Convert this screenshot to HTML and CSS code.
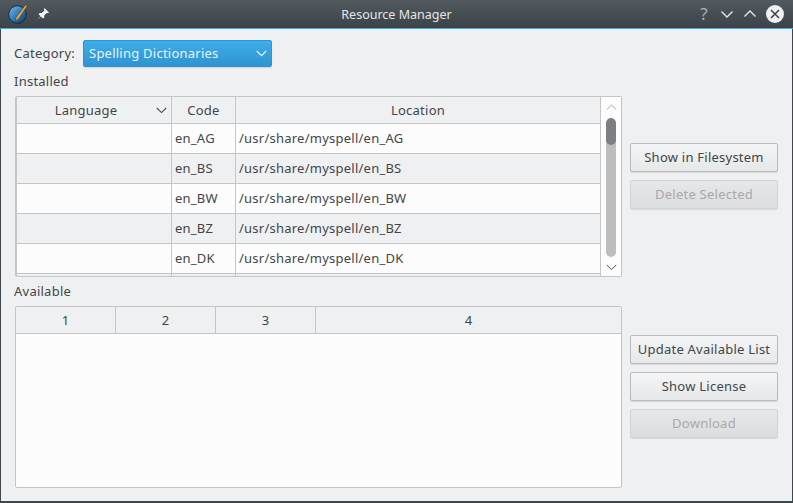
FILE: index.html
```html
<!DOCTYPE html>
<html lang="en">
<head>
<meta charset="utf-8">
<title>Resource Manager</title>
<link rel="stylesheet" href="styles.css">
</head>
<body>
<div class="window">
  <header class="titlebar">
    <div class="tb-left">
      <svg class="logo" width="20" height="20" viewBox="0 0 20 20">
        <defs><linearGradient id="g" x1="0" y1="0" x2="1" y2="1"><stop offset="0" stop-color="#7fbde8"/><stop offset="0.55" stop-color="#2478b8"/><stop offset="1" stop-color="#0c3552"/></linearGradient></defs>
        <circle cx="9.5" cy="10.5" r="8.8" fill="url(#g)" stroke="#0f2c42" stroke-width="1"/>
        <path d="M17.5 0.8 L19.2 2.2 L10.5 15 L7.6 16.8 L8 13.5 Z" fill="#dca64a" stroke="#4f3b1c" stroke-width="0.6"/>
      </svg>
      <svg class="pin" width="14" height="14" viewBox="0 0 14 14">
        <path d="M8.5 1 L13 5.5 L11.8 6.2 L10.8 5.8 L8.2 8.4 L8.2 10.6 L7 11.6 L2.6 7.2 L3.6 6 L5.8 6 L8.4 3.4 L8 2.2 Z M4.6 9.2 L1 13 L5 9.6 Z" fill="#f4f5f6"/>
      </svg>
    </div>
    <div class="tb-title">Resource Manager</div>
    <div class="tb-right">
      <span class="help">?</span>
      <svg width="14" height="14" viewBox="0 0 14 14"><path d="M1.5 4.5 L7 10 L12.5 4.5" class="tb-stroke"/></svg>
      <svg width="14" height="14" viewBox="0 0 14 14"><path d="M1.5 9.5 L7 4 L12.5 9.5" class="tb-stroke"/></svg>
      <svg width="18" height="18" viewBox="0 0 18 18"><circle cx="9" cy="9" r="9" fill="#eef0f1"/><path d="M5 5 L13 13 M13 5 L5 13" stroke="#40474c" stroke-width="1.6" fill="none"/></svg>
    </div>
  </header>
  <main class="content">
    <div class="category-row">
      <span class="label category-label">Category:</span>
      <div class="combo">
        <span class="combo-text">Spelling Dictionaries</span>
        <svg width="11" height="7" viewBox="0 0 11 7"><path d="M0.8 1 L5.5 5.6 L10.2 1" fill="none" stroke="#e4f3fc" stroke-width="1.2"/></svg>
      </div>
    </div>
    <div class="section-label label installed-label">Installed</div>
    <section class="row installed-row">
      <div class="frame installed">
        <div class="table-area">
          <div class="thead cols-a">
            <div class="th th-sort"><span>Language</span>
              <svg width="11" height="7" viewBox="0 0 11 7"><path d="M0.8 1 L5.5 5.6 L10.2 1" fill="none" stroke="#4d4d4d" stroke-width="1.1"/></svg>
            </div>
            <div class="th">Code</div>
            <div class="th">Location</div>
          </div>
          <div class="tr cols-a"><div class="td"></div><div class="td">en_AG</div><div class="td">/usr/share/myspell/en_AG</div></div>
          <div class="tr alt cols-a"><div class="td"></div><div class="td">en_BS</div><div class="td">/usr/share/myspell/en_BS</div></div>
          <div class="tr cols-a"><div class="td"></div><div class="td">en_BW</div><div class="td">/usr/share/myspell/en_BW</div></div>
          <div class="tr alt cols-a"><div class="td"></div><div class="td">en_BZ</div><div class="td">/usr/share/myspell/en_BZ</div></div>
          <div class="tr cols-a"><div class="td"></div><div class="td">en_DK</div><div class="td">/usr/share/myspell/en_DK</div></div>
          <div class="tr alt cols-a"><div class="td"></div><div class="td"></div><div class="td"></div></div>
        </div>
        <div class="scrollbar">
          <svg width="11" height="7" viewBox="0 0 11 7"><path d="M0.8 5.6 L5.5 1 L10.2 5.6" fill="none" stroke="#a9abad" stroke-width="1"/></svg>
          <div class="track"><div class="thumb"></div></div>
          <svg width="11" height="7" viewBox="0 0 11 7"><path d="M0.8 1 L5.5 5.6 L10.2 1" fill="none" stroke="#4d4d4d" stroke-width="1"/></svg>
        </div>
      </div>
      <div class="side side-top">
        <button class="btn">Show in Filesystem</button>
        <button class="btn" disabled>Delete Selected</button>
      </div>
    </section>
    <div class="section-label label available-label">Available</div>
    <section class="row">
      <div class="frame available">
        <div class="table-area">
          <div class="thead cols-b">
            <div class="th">1</div>
            <div class="th">2</div>
            <div class="th">3</div>
            <div class="th th-last">4</div>
          </div>
        </div>
      </div>
      <div class="side side-bottom">
        <button class="btn">Update Available List</button>
        <button class="btn">Show License</button>
        <button class="btn" disabled>Download</button>
      </div>
    </section>
  </main>
</div>
</body>
</html>
```

FILE: styles.css
```css
* { box-sizing: border-box; }
html, body { margin: 0; padding: 0; }
body {
  width: 793px;
  height: 503px;
  overflow: hidden;
  font-family: "Noto Sans", sans-serif;
  font-size: 13px;
  letter-spacing: 0.24px;
  color: #434648;
}
.window {
  width: 793px;
  height: 503px;
  display: flex;
  flex-direction: column;
  background: #eff0f2;
  border-left: 1px solid #3f474d;
  border-right: 1px solid #3f474d;
  border-bottom: 2px solid #3f474d;
}
.titlebar {
  flex: 0 0 29px;
  margin: 0 -1px;
  display: flex;
  align-items: center;
  justify-content: space-between;
  position: relative;
  background: linear-gradient(#525a60, #3b4248);
  border-bottom: 1px solid #3daee9;
  padding: 0 9px 0 8px;
}
.tb-left { display: flex; align-items: center; gap: 8px; }
.tb-title {
  position: absolute;
  left: 0;
  right: 0;
  top: 6px;
  text-align: center;
  color: #e4e6e8;
  font-size: 12.5px;
  letter-spacing: 0;
  line-height: 17px;
}
.tb-right { display: flex; align-items: center; gap: 9px; }
.help { color: #aab0b5; font-size: 17px; line-height: 18px; width: 14px; text-align: center; }
.tb-stroke { fill: none; stroke: #e8eaeb; stroke-width: 1.3; }
.content { flex: 1; padding: 11px 14px 0 13px; display: flex; flex-direction: column; }
.label { line-height: 18px; }
.category-row { display: flex; align-items: center; gap: 7px; height: 27px; }
.category-label { width: 62px; padding-bottom: 2px; height: 20px; }
.combo {
  width: 189px;
  height: 27px;
  display: flex;
  align-items: center;
  justify-content: space-between;
  padding: 0 4px 0 5px;
  border: 1px solid #2e93cf;
  border-radius: 2px;
  background: linear-gradient(#3daee9, #2f93d1);
  color: #e6f4fd;
  box-shadow: 0 1px 1px rgba(0,0,0,.12);
}
.combo-text { padding-bottom: 2px; }
.section-label { height: 18px; }
.installed-label { margin-top: 5px; }
.available-label { margin-top: 5px; }
.row { display: flex; align-items: flex-start; margin-top: 6px; }
.frame {
  display: flex;
  margin-left: 1px;
  width: 607px;
  background: #fcfcfc;
  border: 1px solid #c3c5c7;
  border-radius: 2px;
  overflow: hidden;
}
.installed { height: 181px; border-left-width: 2px; }
.available { height: 182px; }
.table-area { flex: 1; min-width: 0; overflow: hidden; }
.thead { height: 27px; background: #eff0f2; border-bottom: 1px solid #c3c5c7; }
.cols-a { display: grid; grid-template-columns: 155px 64px 1fr; }
.cols-b { display: grid; grid-template-columns: 100px 100px 100px 1fr; }
.th {
  display: flex;
  align-items: center;
  justify-content: center;
  border-right: 1px solid #c3c5c7;
  position: relative;
}
.th:last-child { border-right: none; }
.th-last { border-right: 2px solid #c3c5c7; }
.th-sort span { margin-right: 16px; }
.th-sort svg { position: absolute; right: 4px; top: 10px; }
.tr { height: 30px; background: #fcfcfc; border-bottom: 1px solid #c3c5c7; }
.tr.alt { background: #eff0f2; }
.td {
  display: flex;
  align-items: center;
  padding: 0 0 2px 3px;
  border-right: 1px solid #c3c5c7;
  white-space: nowrap;
}
.td:last-child { border-right: none; }
.scrollbar {
  flex: 0 0 21px;
  display: flex;
  flex-direction: column;
  align-items: center;
  border-left: 1px solid #c3c5c7;
  background: #fcfcfc;
  padding-top: 7px;
  gap: 7px;
}
.track { width: 10px; height: 139px; background: #bcbdbe; border-radius: 5px; overflow: hidden; }
.thumb { width: 10px; height: 27px; background: #7b7f83; border-radius: 5px; }
.side { display: flex; flex-direction: column; gap: 8px; margin-left: 8px; width: 148px; }
.side-top { padding-top: 47px; }
.side-bottom { padding-top: 29px; }
.btn {
  width: 148px;
  height: 29px;
  padding: 0 0 2px;
  font: inherit;
  letter-spacing: inherit;
  color: #434648;
  border: 1px solid #b9bbbd;
  border-radius: 2px;
  background: linear-gradient(#f4f5f6, #e6e7e9);
  box-shadow: 0 1px 1px rgba(0,0,0,.1);
}
.btn:disabled {
  color: #a7a9ab;
  border-color: #d2d3d5;
  background: linear-gradient(#e6e7e9, #dcdddf);
}
```
